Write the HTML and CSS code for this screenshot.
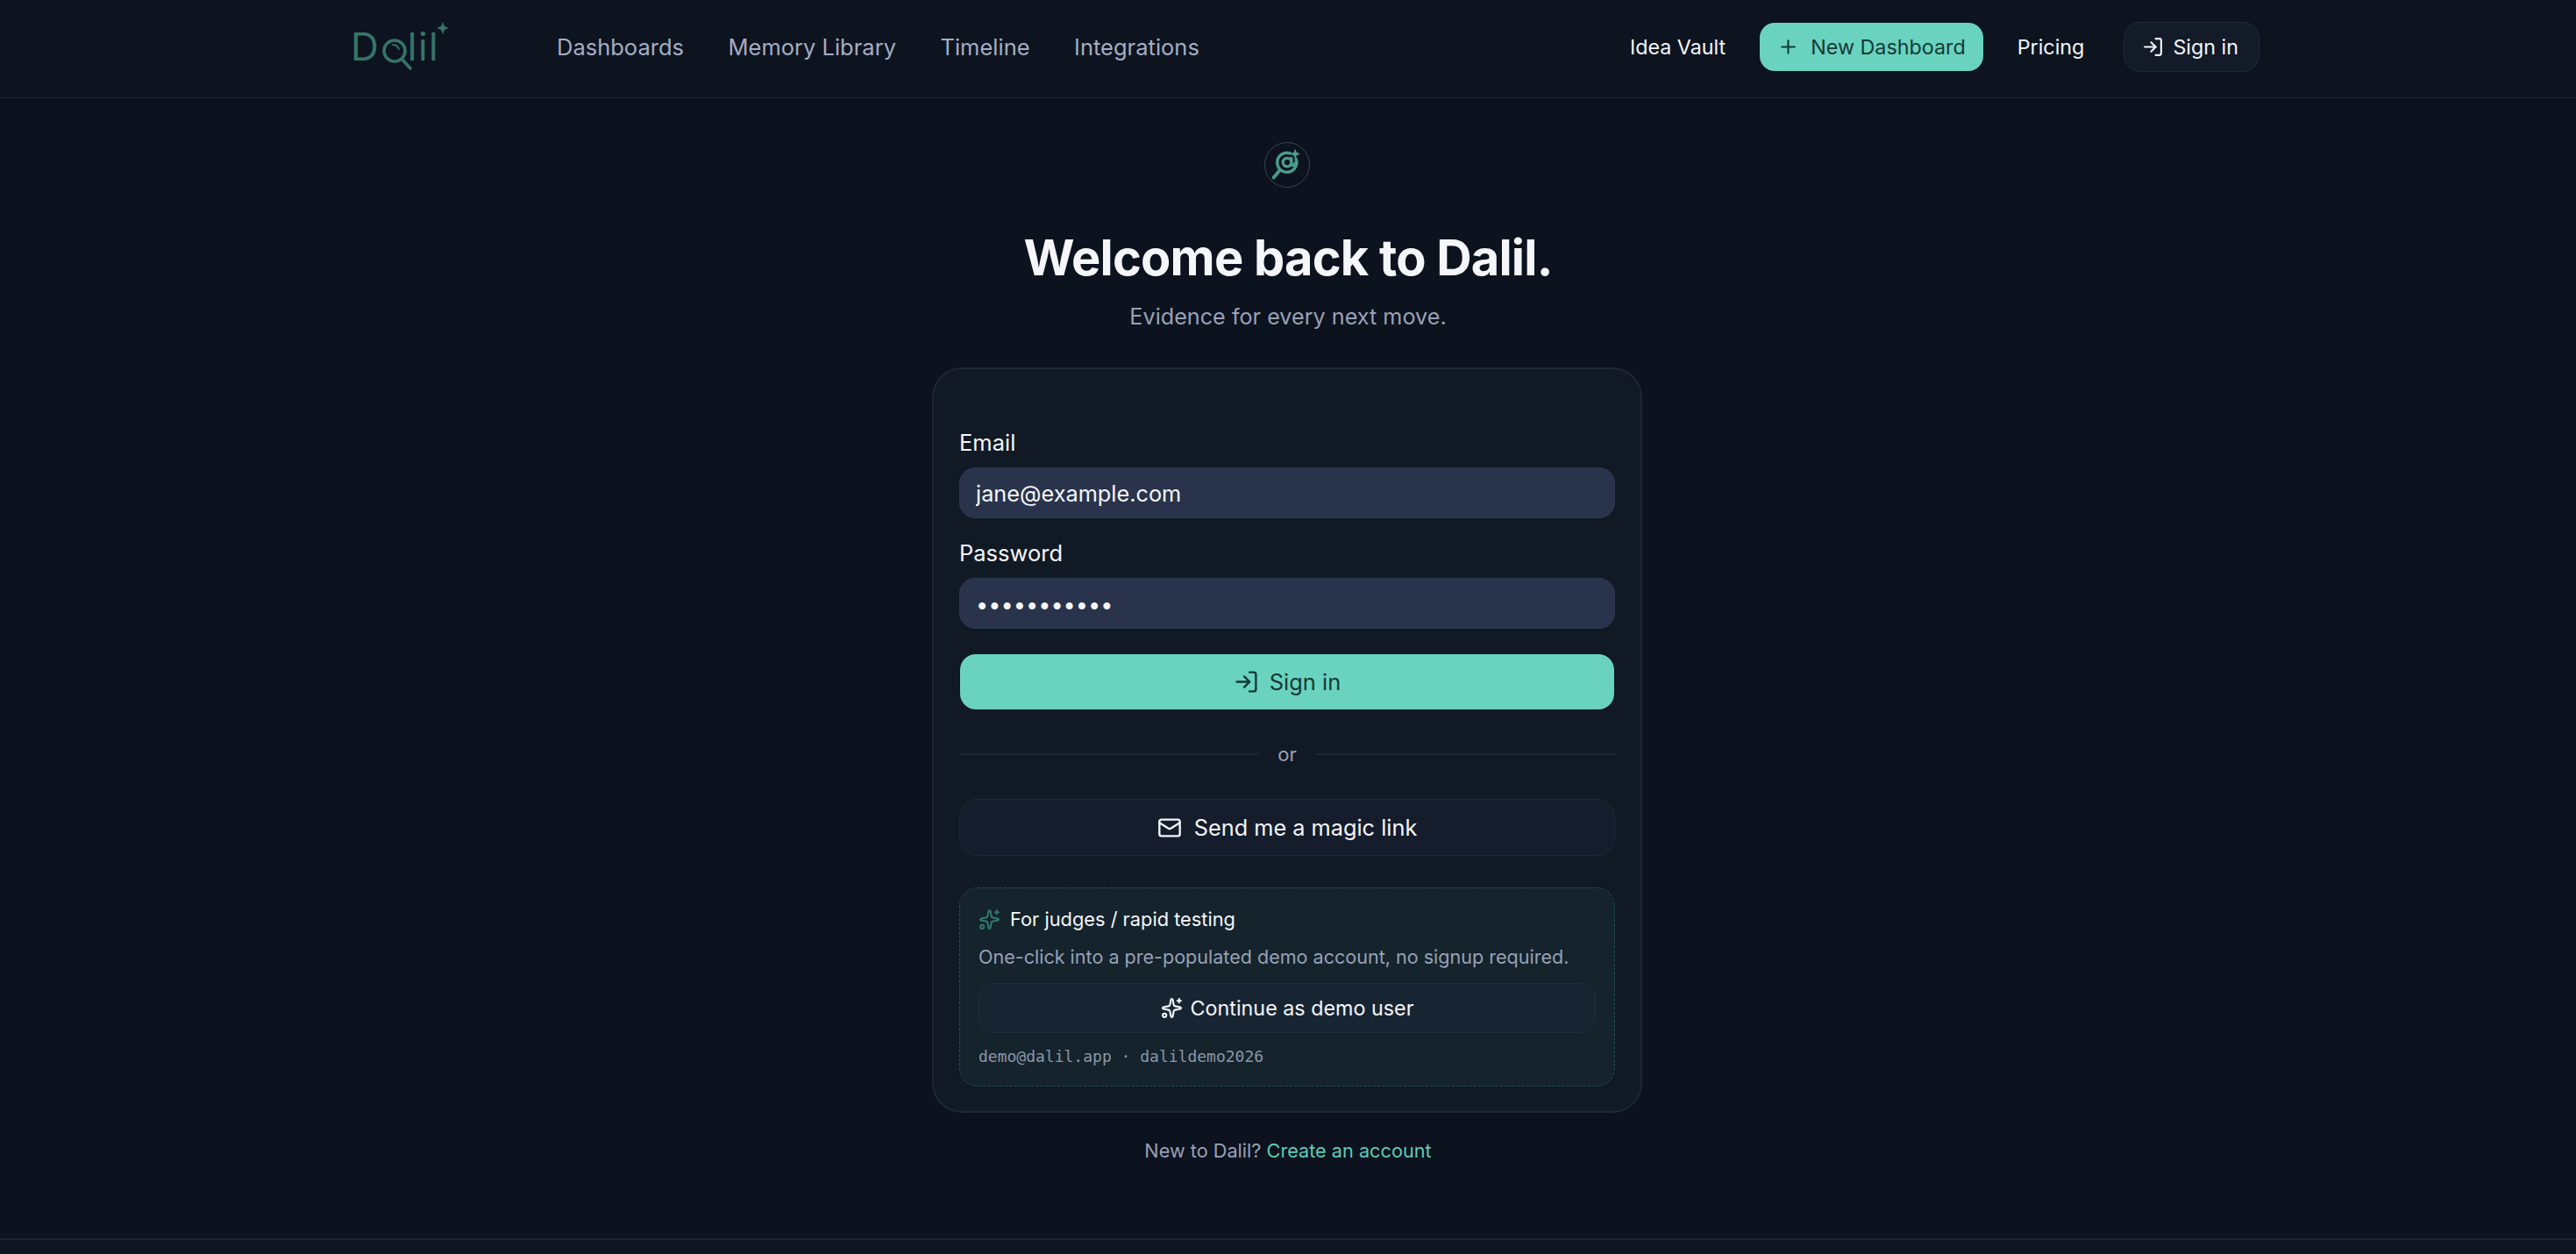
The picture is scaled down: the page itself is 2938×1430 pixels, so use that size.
FILE: index.html
```html
<!DOCTYPE html>
<html lang="en">
<head>
<meta charset="utf-8">
<title>Dalil - Sign in</title>
<link rel="stylesheet" href="styles.css">
</head>
<body>
<svg class="defs" width="0" height="0" aria-hidden="true">
  <symbol id="i-login" viewBox="0 0 24 24"><path d="M15 3h4a2 2 0 0 1 2 2v14a2 2 0 0 1-2 2h-4"/><path d="m10 17 5-5-5-5"/><path d="M15 12H3"/></symbol>
  <symbol id="i-plus" viewBox="0 0 24 24"><path d="M5 12h14"/><path d="M12 5v14"/></symbol>
  <symbol id="i-mail" viewBox="0 0 24 24"><path d="m22 7-8.991 5.727a2 2 0 0 1-2.009 0L2 7"/><rect x="2" y="4" width="20" height="16" rx="2"/></symbol>
  <symbol id="i-sparkles" viewBox="0 0 24 24"><path d="M11.017 2.814a1 1 0 0 1 1.966 0l1.051 5.558a2 2 0 0 0 1.594 1.594l5.558 1.051a1 1 0 0 1 0 1.966l-5.558 1.051a2 2 0 0 0-1.594 1.594l-1.051 5.558a1 1 0 0 1-1.966 0l-1.051-5.558a2 2 0 0 0-1.594-1.594l-5.558-1.051a1 1 0 0 1 0-1.966l5.558-1.051a2 2 0 0 0 1.594-1.594z"/><path d="M20 2v4"/><path d="M22 4h-4"/><circle cx="4" cy="20" r="2"/></symbol>
</svg>
<header class="topbar">
  <div class="topbar-inner">
    <a class="logo" href="#">
      <span class="logo-text">D</span>
      <svg class="logo-glass" viewBox="0 0 36 44"><circle cx="15" cy="18" r="12"/><path d="M23 27l10 11"/><path class="glint" d="M13 11c4 0 6 2 7 5"/></svg>
      <span class="logo-text logo-rest">lil</span>
      <svg class="logo-star" viewBox="0 0 16 16"><path d="M8 1l2 5 5 2-5 2-2 5-2-5-5-2 5-2z"/></svg>
    </a>
    <nav class="nav">
      <a href="#">Dashboards</a>
      <a href="#">Memory Library</a>
      <a href="#">Timeline</a>
      <a href="#">Integrations</a>
    </nav>
    <div class="actions">
      <a class="link" href="#">Idea Vault</a>
      <a class="btn-new" href="#"><svg class="ico ico-25"><use href="#i-plus"/></svg>New Dashboard</a>
      <a class="link" href="#">Pricing</a>
      <a class="btn-signin" href="#"><svg class="ico ico-25"><use href="#i-login"/></svg>Sign in</a>
    </div>
  </div>
</header>
<main class="main">
  <div class="brand-mark">
    <svg viewBox="0 0 52 52"><path d="M36.500 19A11.500 11.500 0 1 1 30 12.500"/><circle cx="26" cy="23" r="5"/><path d="M31 18v6c0 3.500 4 3.500 4.500 0"/><path class="mark-h" d="M17.500 32L10 41"/><path class="mark-star" d="M35.500 7l1.800 4.200 4.200 1.800-4.200 1.800L35.500 19l-1.800-4.200L29.500 13l4.200-1.800z"/></svg>
  </div>
  <h1 class="title">Welcome back to Dalil.</h1>
  <p class="subtitle">Evidence for every next move.</p>
  <section class="card">
    <form class="form">
      <label class="field-label" for="email">Email</label>
      <input class="input" id="email" type="email" value="jane@example.com">
      <label class="field-label field-label-2" for="password">Password</label>
      <input class="input" id="password" type="password" value="dalildemo26">
      <button class="btn-primary" type="button"><svg class="ico ico-29"><use href="#i-login"/></svg>Sign in</button>
      <div class="divider"><span>or</span></div>
      <button class="btn-ghost" type="button"><svg class="ico ico-28"><use href="#i-mail"/></svg>Send me a magic link</button>
      <div class="demo">
        <div class="demo-head"><svg class="ico ico-25 teal-dim"><use href="#i-sparkles"/></svg>For judges / rapid testing</div>
        <p class="demo-text">One-click into a pre-populated demo account, no signup required.</p>
        <button class="btn-demo" type="button"><svg class="ico ico-25"><use href="#i-sparkles"/></svg>Continue as demo user</button>
        <code class="demo-creds">demo@dalil.app · dalildemo2026</code>
      </div>
    </form>
  </section>
  <p class="signup">New to Dalil? <a href="#">Create an account</a></p>
</main>
<footer class="footer"></footer>
</body>
</html>
```

FILE: styles.css
```css
* { box-sizing: border-box; }
html, body { margin: 0; height: 100%; }
body {
  background: #0c121e;
  color: #f4f6fa;
  font-family: Inter, "Noto Sans", sans-serif;
  display: flex;
  flex-direction: column;
  height: 1430px;
  overflow: hidden;
}
a { color: inherit; text-decoration: none; }
.defs { position: absolute; }
.ico { fill: none; stroke: currentColor; stroke-width: 2; stroke-linecap: round; stroke-linejoin: round; flex: none; }
.ico-25 { width: 25px; height: 25px; }
.ico-28 { width: 28px; height: 28px; }
.ico-29 { width: 29px; height: 29px; }
.teal-dim { color: #35756a; }

.topbar { height: 112px; flex: none; background: #0d141f; border-bottom: 1px solid #1f2838; }
.topbar-inner { width: 2216px; height: 111px; margin: 0 auto; padding-left: 41px; display: flex; align-items: center; padding-bottom: 4px; }
.logo { position: relative; display: flex; align-items: center; width: 233px; height: 60px; padding-bottom: 2px; color: #35756a; }
.logo-text { font-size: 44px; font-weight: 400; line-height: 1; }
.logo-text:first-child { margin-left: -2px; }
.logo-glass { width: 36px; height: 44px; margin: 19px -6px 0 3px; fill: none; stroke: currentColor; stroke-width: 3.500; stroke-linecap: round; }
.logo-glass .glint { stroke-width: 2; }
.logo-rest { letter-spacing: 1.500px; }
.logo-star { position: absolute; left: 95px; top: 0; width: 16px; height: 16px; fill: currentColor; }
.nav { display: flex; gap: 50.500px; font-size: 25.500px; color: #a4adc4; }
.actions { margin-left: auto; display: flex; align-items: center; font-size: 23.300px; font-weight: 400; }
.link { color: #f4f6fa; }
.btn-new { display: flex; align-items: center; gap: 13px; height: 55px; margin: 0 39px 0 39px; padding: 0 20px; background: #69d3bf; color: #143a36; border-radius: 17px; }
.btn-signin { display: flex; align-items: center; gap: 10px; height: 57px; margin-left: 45px; padding: 0 23px 0 20px; background: #131a28; border: 1px solid #202939; border-radius: 19px; }

.main { flex: 1; display: flex; flex-direction: column; align-items: center; }
.brand-mark { width: 52px; height: 52px; margin-top: 50px; margin-left: -2px; border: 1px solid #3a4350; border-radius: 50%; color: #4a9c8c; }
.brand-mark svg { display: block; width: 50px; height: 50px; fill: none; stroke: currentColor; stroke-width: 3.500; stroke-linecap: round; }
.brand-mark .mark-star { fill: currentColor; stroke: none; }
.brand-mark .mark-h { stroke-width: 4; }
.title { margin: 46px 0 0; font-size: 56px; line-height: 68px; font-weight: 700; letter-spacing: -.800px; color: #f4f6fa; }
.subtitle { margin: 15px 0 0; font-size: 25.200px; line-height: 36px; color: #98a1b6; }
.card { width: 810px; height: 850px; margin: 40px 0 0 -2px; padding: 64px 29px 0; background: #111924; border: 2px solid #1f2733; border-radius: 34px; }
.form { display: flex; flex-direction: column; }
.field-label { font-size: 25.500px; line-height: 40px; font-weight: 400; height: 40px; color: #f4f6fa; }
.field-label-2 { margin-top: 20px; }
.input { width: 100%; height: 58px; margin-top: 8px; padding: 0 18px; background: #29334b; border: 1px solid #2d3850; border-radius: 18px; color: #f4f6fa; font: 400 25.300px Inter, sans-serif; outline: none; }
.btn-primary { display: flex; align-items: center; justify-content: center; gap: 12px; height: 63px; margin: 29px 1px 0; background: #69d3bf; color: #143a36; border: 0; border-radius: 18px; font: 400 25.500px Inter, sans-serif; }
.divider { display: flex; align-items: center; gap: 22px; height: 52px; margin-top: 25px; font-size: 22.100px; color: #98a1b6; }
.divider::before, .divider::after { content: ""; flex: 1; height: 2px; background: #1f2838; }
.btn-ghost { display: flex; align-items: center; justify-content: center; gap: 14px; height: 65px; margin-top: 25px; background: #151d2c; color: #f4f6fa; border: 1px solid #1e2838; border-radius: 20px; font: 400 25.300px Inter, sans-serif; }
.demo { height: 227px; margin-top: 36px; padding: 19px 21px 0; background: #14232c; border: 1px dashed #235149; border-radius: 21px; }
.demo-head { display: flex; align-items: center; gap: 11px; font-size: 21.800px; font-weight: 400; line-height: 32px; }
.demo-text { margin: 11px 0 0; font-size: 21.560px; line-height: 32px; color: #98a1b6; white-space: nowrap; }
.btn-demo { display: flex; align-items: center; justify-content: center; gap: 9px; width: 100%; height: 57px; margin-top: 14px; background: #172532; color: #f4f6fa; border: 1px solid #1e2d3b; border-radius: 16px; font: 400 23.300px Inter, sans-serif; }
.demo-creds { display: block; margin-top: 14px; font-family: "DejaVu Sans Mono", monospace; font-size: 18px; line-height: 26px; color: #8d96a8; }
.signup { margin: 27px 0 0; font-size: 21.700px; line-height: 32px; color: #98a1b6; }
.signup a { color: #5ecbb6; font-weight: 400; }
.footer { height: 18px; flex: none; background: #0f1622; border-top: 2px solid #1d2535; }
```
